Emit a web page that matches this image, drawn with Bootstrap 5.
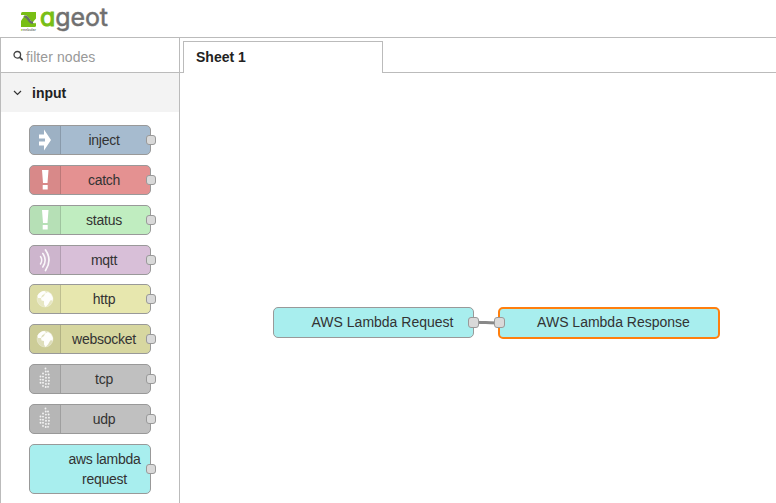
<!DOCTYPE html>
<html lang="en">
<head>
<meta charset="utf-8">
<meta name="viewport" content="width=device-width, initial-scale=1">
<title>ageot</title>
<link href="https://cdn.jsdelivr.net/npm/bootstrap@5.3.0/dist/css/bootstrap.min.css" rel="stylesheet">
<style>
body{font-family:"Liberation Sans",Arial,sans-serif;font-size:14px;line-height:20px;color:#333;background:#fff}
.topbar{height:38px;padding:5px 0 0 20px;border-bottom:1px solid #bbb}
.logo-mark{overflow:visible}
.wordmark{font:400 25px/25px Inter,sans-serif;font-feature-settings:"cv11";color:#707070;-webkit-text-stroke:.5px currentColor;margin-left:2px;letter-spacing:-.1px}
.wordmark span{color:#78be14;-webkit-text-stroke:1.100px currentColor}
.palette{width:180px;border-left:1px solid #bbb;border-right:1px solid #bbb}
.filter{height:35px;border-bottom:1px solid #bbb;padding:3px 0 0 12px;color:#999}
.filter svg{margin-top:-2px}
.filter span{margin-left:3px;letter-spacing:.08px}
.category{height:39px;background:#f3f3f3;padding-left:12px;font-weight:700;color:#222;font-size:14px}
.category span{margin-left:10px}
.nodes{padding:12.800px 0 0 28px;gap:9.930px}
.flow-node{width:122px;height:30px;border:1px solid #999;border-radius:5px;color:#333}
.node-icon{width:31px;background:rgba(0,0,0,.05);border-right:1px solid rgba(0,0,0,.13);border-radius:4px 0 0 4px}
.node-name{padding-left:1px;padding-right:4px;letter-spacing:-.25px}
.node-tall{height:50px}
.node-tall .node-name{padding-left:33px;padding-right:4px}
.port{width:10px;height:10px;border:1px solid #999;border-radius:3px;background:#d9d9d9;right:-6px;top:calc(50% - 5px)}
.tabs{height:35px;padding:3px 0 0 3px}
.tabs::before{content:"";width:3px;margin-left:-3px;border-bottom:1px solid #bbb}
.sheet-tab{width:200px;border:1px solid #bbb;border-bottom:0;padding:0 0 1px 12px;font-weight:700;color:#222}
.tab-rest{border-bottom:1px solid #bbb}
.canvas-node{border:1px solid #999;border-radius:5px;background:#a8eeee;font-size:14px;color:#333}
.req{left:93px;top:234px;width:201px;height:31px;padding:0 0 2px 18px}
.res{left:318px;top:234px;width:222px;height:32px;border:2px solid #ff7f0e;padding:0 0 2px 9px}
.wire{left:293px;top:244px}
.port-out,.port-in{width:11px;height:11px;right:auto}
.port-out{left:288px;top:244px}
.port-in{left:314px;top:244px}
.blue{background:#a6bbcf}.red{background:#e49191}.green{background:#c0edc0}.violet{background:#d8bfd8}
.yellow{background:#e7e7ae}.olive{background:#d7d7a0}.grey{background:#c0c0c0}.cyan{background:#a8eeee}
</style>
<script src="https://cdn.jsdelivr.net/npm/bootstrap@5.3.0/dist/js/bootstrap.bundle.min.js"></script>
</head>
<body class="vh-100 overflow-hidden d-flex flex-column">
<svg class="d-none">
  <symbol id="arrow" viewBox="0 0 14 24"><path d="M1 6.500h5V1.500l7 10.500-7 10.500v-5H1v-4h6v-3H1z" fill="#fff"/></symbol>
  <symbol id="bang" viewBox="0 0 14 24"><path d="M4 2h6.500L9.500 15h-4.500zM4.700 17h5v4.500h-5z" fill="#fff"/></symbol>
  <symbol id="waves" viewBox="0 0 14 24"><g fill="none" stroke="#fff" stroke-opacity=".9" stroke-linecap="round"><path d="M2.500 8.500Q5 12 2.500 16" stroke-width="1.500"/><path d="M4.800 5.500Q9.500 12 4.800 19" stroke-width="1.600"/><path d="M7.500 2Q14.500 12 7.500 22.500" stroke-width="1.700"/></g></symbol>
  <symbol id="globe" viewBox="0 0 18 18"><circle cx="9" cy="9" r="8" fill="#fff" fill-opacity=".35" stroke="#fff" stroke-opacity=".45" stroke-width=".6"/><path d="M1.500 5.500Q4 1 8.500 1l1.500 1.500-2.500 2L6 5.500 5 8 2 8zM5 8l3-2 1-2.500 3-1.500 3 2 2 4-.5 3-1.500-1-1 1-2 3.500-2.500 2.500-1.500-2.500V11L5.500 10.500z" fill="#fff" fill-opacity=".95"/></symbol>
  <symbol id="dots" viewBox="0 0 14 24"><g fill="none" stroke="#fff" stroke-opacity=".85" stroke-width="1.900" stroke-linecap="round" stroke-dasharray="0 3.100"><path d="M2.500 9.500v7"/><path d="M5 6.500v12.500"/><path d="M7.500 1.500Q8.500 12 7.500 23"/><path d="M10 4.500Q12 12 10 20"/></g></symbol>
</svg>
<header class="topbar d-flex flex-shrink-0">
  <svg class="logo-mark" width="18" height="27" viewBox="0 0 18 27"><path d="M2.500 7H16v13.500q0 1.500-1.500 1.500H1V8.500Q1 7 2.500 7z" fill="#78be14"/><path d="M1 10.500h3.500q2 0 3.500 2l3 4q1 1.200 3 1.200h2" fill="none" stroke="#fff" stroke-width="1"/><path d="M1 11h2q1.500 0 0 2t-2 3z" fill="#fff"/><path d="M16 13.500v4h-2q-1.500 0 0-1.800z" fill="#fff"/><path d="M4.500 11.500q2 0 3 1.500l2.500 3.500q1 1.300 3 1.300" fill="none" stroke="#68706a" stroke-width="2.400"/><text x="1" y="25.500" font-size="3.500" textLength="15" lengthAdjust="spacingAndGlyphs" fill="#777" font-weight="bold"><tspan fill="#78be14">e</tspan>nebular</text></svg>
  <div class="wordmark"><span>a</span>geot</div>
</header>
<main class="d-flex flex-grow-1">
  <aside class="palette flex-shrink-0">
    <div class="filter d-flex align-items-center">
      <svg width="10" height="12" viewBox="0 0 10 12"><circle cx="4.300" cy="4.800" r="3.300" fill="none" stroke="#444" stroke-width="1.300"/><path d="M6.600 7.100l3 3" stroke="#444" stroke-width="1.600"/></svg>
      <span>filter nodes</span>
    </div>
    <div class="category d-flex align-items-center">
      <svg width="9" height="6" viewBox="0 0 9 6"><path d="M1 1l3.500 3.500L8 1" fill="none" stroke="#333" stroke-width="1.200"/></svg>
      <span>input</span>
    </div>
    <div class="nodes d-flex flex-column">
      <div class="flow-node blue position-relative d-flex"><div class="node-icon d-flex align-items-center justify-content-center"><svg width="14" height="24"><use href="#arrow"/></svg></div><div class="node-name flex-fill d-flex align-items-center justify-content-center text-center">inject</div><i class="port position-absolute"></i></div>
      <div class="flow-node red position-relative d-flex"><div class="node-icon d-flex align-items-center justify-content-center"><svg width="14" height="24"><use href="#bang"/></svg></div><div class="node-name flex-fill d-flex align-items-center justify-content-center text-center">catch</div><i class="port position-absolute"></i></div>
      <div class="flow-node green position-relative d-flex"><div class="node-icon d-flex align-items-center justify-content-center"><svg width="14" height="24"><use href="#bang"/></svg></div><div class="node-name flex-fill d-flex align-items-center justify-content-center text-center">status</div><i class="port position-absolute"></i></div>
      <div class="flow-node violet position-relative d-flex"><div class="node-icon d-flex align-items-center justify-content-center"><svg width="14" height="24"><use href="#waves"/></svg></div><div class="node-name flex-fill d-flex align-items-center justify-content-center text-center">mqtt</div><i class="port position-absolute"></i></div>
      <div class="flow-node yellow position-relative d-flex"><div class="node-icon d-flex align-items-center justify-content-center"><svg width="18" height="18"><use href="#globe"/></svg></div><div class="node-name flex-fill d-flex align-items-center justify-content-center text-center">http</div><i class="port position-absolute"></i></div>
      <div class="flow-node olive position-relative d-flex"><div class="node-icon d-flex align-items-center justify-content-center"><svg width="18" height="18"><use href="#globe"/></svg></div><div class="node-name flex-fill d-flex align-items-center justify-content-center text-center">websocket</div><i class="port position-absolute"></i></div>
      <div class="flow-node grey position-relative d-flex"><div class="node-icon d-flex align-items-center justify-content-center"><svg width="14" height="24"><use href="#dots"/></svg></div><div class="node-name flex-fill d-flex align-items-center justify-content-center text-center">tcp</div><i class="port position-absolute"></i></div>
      <div class="flow-node grey position-relative d-flex"><div class="node-icon d-flex align-items-center justify-content-center"><svg width="14" height="24"><use href="#dots"/></svg></div><div class="node-name flex-fill d-flex align-items-center justify-content-center text-center">udp</div><i class="port position-absolute"></i></div>
      <div class="flow-node node-tall cyan position-relative d-flex"><div class="node-name flex-fill d-flex align-items-center justify-content-center text-center">aws lambda<br>request</div><i class="port position-absolute"></i></div>
    </div>
  </aside>
  <section class="flex-grow-1 d-flex flex-column">
    <div class="tabs d-flex flex-shrink-0">
      <div class="sheet-tab d-flex align-items-center">Sheet 1</div>
      <div class="tab-rest flex-grow-1"></div>
    </div>
    <div class="flex-grow-1 position-relative">
      <div class="canvas-node req position-absolute d-flex align-items-center justify-content-center">AWS Lambda Request</div>
      <div class="canvas-node res position-absolute d-flex align-items-center justify-content-center">AWS Lambda Response</div>
      <svg class="wire position-absolute" width="28" height="12"><path d="M0 5.200C8 5.200 18 6 27 6" fill="none" stroke="#888" stroke-width="3"/></svg>
      <i class="port port-out position-absolute"></i><i class="port port-in position-absolute"></i>
    </div>
  </section>
</main>
</body>
</html>
